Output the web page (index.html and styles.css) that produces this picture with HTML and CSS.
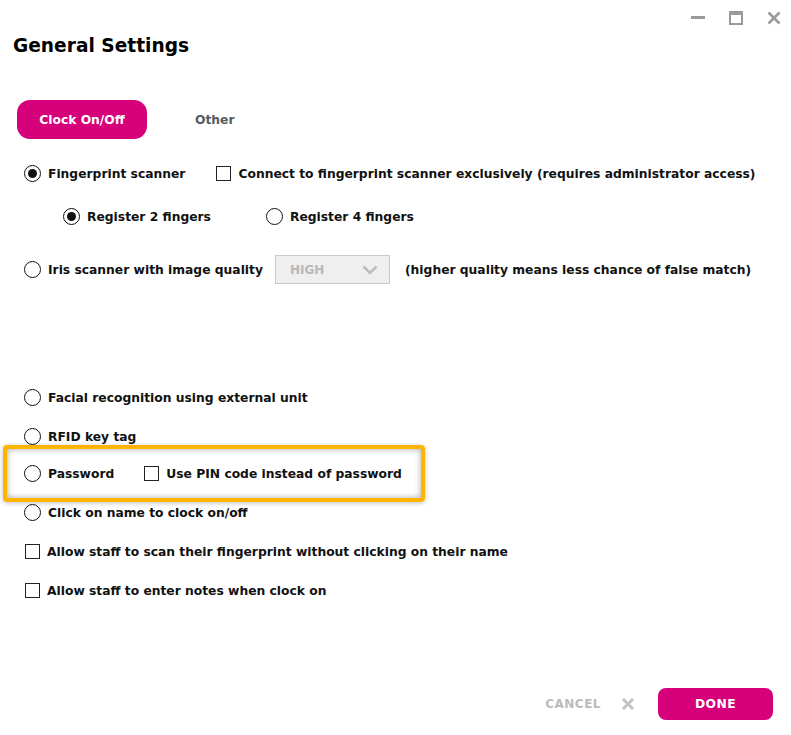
FILE: index.html
```html
<!DOCTYPE html>
<html lang="en">
<head>
  <meta charset="UTF-8">
  <title>General Settings</title>
  <link rel="stylesheet" href="styles.css">
</head>
<body>

<div class="dialog">
  <div class="header">
    <h1 class="title">General Settings</h1>
    <div class="win-controls">
      <span class="win-btn"><svg width="14" height="14" viewBox="0 0 14 14"><rect x="0" y="5" width="14" height="3" fill="#9a9a9a"/></svg></span>
      <span class="win-btn"><svg width="14" height="14" viewBox="0 0 14 14"><rect x="1" y="1" width="12" height="12" fill="none" stroke="#9a9a9a" stroke-width="2"/><rect x="1" y="1" width="12" height="3" fill="#9a9a9a"/></svg></span>
      <span class="win-btn"><svg width="14" height="14" viewBox="0 0 14 14"><path d="M1.5 1.5 L12.5 12.5 M12.5 1.5 L1.5 12.5" stroke="#9a9a9a" stroke-width="2.6"/></svg></span>
    </div>
  </div>

  <div class="tabs">
    <button class="tab active">Clock On/Off</button>
    <button class="tab">Other</button>
  </div>

  <div class="options">
    <div class="row row-first">
      <label class="opt"><span class="radio checked"></span>Fingerprint scanner</label>
      <label class="opt opt-gap"><span class="check"></span>Connect to fingerprint scanner exclusively (requires administrator access)</label>
    </div>

    <div class="row row-sub">
      <label class="opt"><span class="radio checked"></span>Register 2 fingers</label>
      <label class="opt opt-sub-gap"><span class="radio"></span>Register 4 fingers</label>
    </div>

    <div class="row row-iris">
      <label class="opt"><span class="radio"></span>Iris scanner with image quality</label>
      <div class="select">
        <span>HIGH</span>
        <svg width="16" height="10" viewBox="0 0 16 10"><path d="M1.5 1.5 L8 8 L14.5 1.5" fill="none" stroke="#bdbdbd" stroke-width="2.6"/></svg>
      </div>
      <span class="note">(higher quality means less chance of false match)</span>
    </div>

    <div class="row row-facial">
      <label class="opt"><span class="radio"></span>Facial recognition using external unit</label>
    </div>

    <div class="row">
      <label class="opt"><span class="radio"></span>RFID key tag</label>
    </div>

    <div class="highlight">
      <div class="row">
        <label class="opt"><span class="radio"></span>Password</label>
        <label class="opt opt-pin"><span class="check"></span>Use PIN code instead of password</label>
      </div>
    </div>

    <div class="row">
      <label class="opt"><span class="radio"></span>Click on name to clock on/off</label>
    </div>

    <div class="row">
      <label class="opt"><span class="check"></span>Allow staff to scan their fingerprint without clicking on their name</label>
    </div>

    <div class="row">
      <label class="opt"><span class="check"></span>Allow staff to enter notes when clock on</label>
    </div>
  </div>

  <div class="footer">
    <button class="cancel">CANCEL</button>
    <svg class="cancel-x" width="14" height="14" viewBox="0 0 14 14"><path d="M2 2 L12 12 M12 2 L2 12" stroke="#c4c4c4" stroke-width="3"/></svg>
    <button class="done">DONE</button>
  </div>
</div>

</body>
</html>
```

FILE: styles.css
```css
* {
  box-sizing: border-box;
}

body {
  margin: 0;
  background: #ffffff;
  font-family: "DejaVu Sans", Arial, sans-serif;
  color: #111111;
}

.dialog {
  width: 791px;
  height: 735px;
  display: flex;
  flex-direction: column;
  padding: 0 18px 0 13px;
}

.header {
  display: flex;
  justify-content: space-between;
  align-items: flex-start;
  height: 100px;
  margin-right: -8px;
}

.title {
  margin: 34px 0 0;
  font-size: 18.6px;
  font-weight: bold;
  color: #000000;
  line-height: 24px;
}

.win-controls {
  display: flex;
  gap: 24px;
  padding-top: 11px;
}

.win-btn {
  display: block;
  width: 14px;
  height: 14px;
}

.win-btn svg {
  display: block;
}

.tabs {
  display: flex;
  align-items: center;
  gap: 18px;
  padding-left: 4px;
}

.tab {
  font-family: inherit;
  font-size: 12.3px;
  font-weight: bold;
  border: none;
  background: none;
  color: #555a60;
  height: 39px;
  padding: 0 30px;
  border-radius: 13px;
  cursor: pointer;
}

.tab.active {
  background: #d5007a;
  color: #ffffff;
  padding: 0 20px;
  width: 130px;
}

.options {
  padding-left: 11px;
  font-size: 12.3px;
  font-weight: bold;
}

.row {
  display: flex;
  align-items: center;
  height: 39px;
}

.row-first {
  margin-top: 15px;
}

.row-sub {
  margin-top: 4px;
  padding-left: 39px;
}

.row-iris {
  margin-top: 14px;
}

.row-facial {
  margin-top: 89px;
}

.opt {
  display: flex;
  align-items: center;
  gap: 7px;
  white-space: nowrap;
}

.opt-gap {
  margin-left: 30px;
}

.opt-sub-gap {
  margin-left: 55px;
}

.opt-pin {
  margin-left: 29px;
}

.radio {
  width: 17px;
  height: 17px;
  border: 1.6px solid #111111;
  border-radius: 50%;
  display: flex;
  align-items: center;
  justify-content: center;
  flex-shrink: 0;
}

.radio.checked::after {
  content: "";
  width: 9px;
  height: 9px;
  border-radius: 50%;
  background: #111111;
}

.check {
  width: 15px;
  height: 15px;
  margin-left: 1px;
  border: 1.6px solid #222222;
  flex-shrink: 0;
}

.select {
  margin-left: 12px;
  width: 115px;
  height: 29px;
  border: 1px solid #c9c9c9;
  background: #efefef;
  display: flex;
  align-items: center;
  justify-content: space-between;
  padding: 0 11px 0 14px;
  color: #b8b8b8;
  font-size: 12px;
}

.select svg {
  display: block;
}

.note {
  margin-left: 15px;
  white-space: nowrap;
}

.highlight {
  width: 422px;
  margin: -11px 0 -9px -21px;
  padding: 5px 17px 5px 17px;
  border: 4px solid #ffb500;
  border-radius: 4px;
  box-shadow: inset 0 0 6px rgba(0, 0, 0, 0.35), 0 1px 5px rgba(0, 0, 0, 0.25);
}

.footer {
  margin-top: auto;
  margin-bottom: 15px;
  display: flex;
  align-items: center;
  justify-content: flex-end;
}

.cancel {
  font-family: inherit;
  font-size: 12px;
  font-weight: bold;
  color: #bbbbbb;
  background: none;
  border: none;
  padding: 0;
  letter-spacing: 0.5px;
}

.cancel-x {
  margin-left: 20px;
}

.done {
  margin-left: 23px;
  width: 115px;
  height: 32px;
  border: none;
  border-radius: 8px;
  background: #d5007a;
  color: #ffffff;
  font-family: inherit;
  font-size: 12.3px;
  font-weight: bold;
  letter-spacing: 0.4px;
}
```
